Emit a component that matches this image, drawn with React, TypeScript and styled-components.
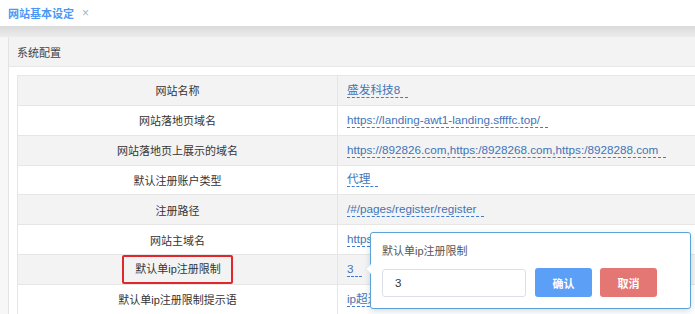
import styled, { createGlobalStyle } from "styled-components";

const GlobalStyle = createGlobalStyle`
  html, body {
    margin: 0;
    padding: 0;
    background: #fff;
    overflow: hidden;
  }
  body {
    font-family: "Helvetica Neue", "Liberation Sans", "Noto Sans CJK SC", sans-serif;
    font-size: 11px;
    color: #333;
  }
`;

const Page = styled.div`
  width: 695px;
  height: 314px;
  display: flex;
  flex-direction: column;
  overflow: hidden;
`;

const TabBar = styled.div`
  flex-shrink: 0;
  height: 26px;
  display: flex;
  align-items: center;
  padding-left: 8px;
  background: #fff;
`;

const Tab = styled.div`
  display: flex;
  align-items: center;
  gap: 8px;
  color: #4d98f4;
  font-size: 11px;
  font-weight: 600;
`;

const TabClose = styled.span`
  color: #a8b4c4;
  font-weight: 400;
  font-size: 12px;
`;

const ShadowBand = styled.div`
  flex-shrink: 0;
  height: 11px;
  background: linear-gradient(#dadada, #ececec);
`;

const Content = styled.div`
  flex: 1;
  display: flex;
  padding-left: 8px;
  background: #f7f7f7;
`;

const Panel = styled.div`
  flex: 1;
  border-left: 1px solid #e3e3e3;
  background: #fff;
`;

const PanelHeader = styled.div`
  height: 29px;
  display: flex;
  align-items: center;
  padding-left: 8px;
  background: #f3f3f3;
  border-bottom: 1px solid #e8e8e8;
  color: #444;
`;

const PanelBody = styled.div`
  padding: 8px 0 0 8px;
`;

const Table = styled.table`
  width: 700px;
  border-collapse: collapse;
  border: 1px solid #e6e6e6;
`;

const Row = styled.tr<{ $striped: boolean }>`
  height: 29.85px;
  background: ${({ $striped }) => ($striped ? "#f3f3f3" : "#fff")};
`;

const LabelCell = styled.td`
  width: 319px;
  padding: 0;
  text-align: center;
  border-right: 1px solid #e6e6e6;
  border-bottom: 1px solid #e6e6e6;
  color: #333;
`;

const ValueCell = styled.td`
  padding: 0 0 0 9px;
  border-bottom: 1px solid #e6e6e6;
  position: relative;
`;

const Highlight = styled.span`
  display: inline-block;
  vertical-align: middle;
  line-height: 25px;
  padding: 0 10px 0 11px;
  border: 2px solid #e0282c;
  border-radius: 2px;
`;

const EditLink = styled.span`
  display: inline-block;
  line-height: 14px;
  padding-right: 8px;
  font-size: 11.7px;
  color: #4274b8;
  border-bottom: 1px dashed #3f7bd0;
  white-space: nowrap;
`;

const Popover = styled.div`
  position: absolute;
  left: 32px;
  top: -23px;
  width: 297px;
  padding: 11px;
  background: #fff;
  border: 1px solid #5aa2da;
  border-radius: 3px;
  box-shadow: 0 2px 6px rgba(0, 0, 0, 0.15);
  z-index: 2;

  &::before,
  &::after {
    content: "";
    position: absolute;
    top: 31px;
    border-style: solid;
    border-color: transparent;
  }
  &::before {
    left: -6px;
    border-width: 5px 6px 5px 0;
    border-right-color: #d6e6f3;
  }
  &::after {
    left: -5px;
    border-width: 5px 6px 5px 0;
    border-right-color: #fff;
  }
`;

const PopTitle = styled.div`
  line-height: 14px;
  color: #555;
  margin-bottom: 10px;
`;

const PopForm = styled.div`
  display: flex;
  align-items: center;
`;

const NumInput = styled.input`
  box-sizing: border-box;
  width: 144px;
  height: 28px;
  padding: 0 12px;
  border: 1px solid #dcdfe6;
  border-radius: 3px;
  font-family: inherit;
  font-size: 11.5px;
  color: #333;
  outline: none;
`;

const Button = styled.button<{ $tone: "primary" | "danger" }>`
  height: 29px;
  width: 57px;
  margin-left: ${({ $tone }) => ($tone === "primary" ? "9px" : "8px")};
  border: none;
  border-radius: 3px;
  background: ${({ $tone }) => ($tone === "primary" ? "#5b9ff7" : "#e47673")};
  color: #fff;
  font-family: inherit;
  font-size: 11px;
  font-weight: 700;
  padding: 0;
`;

const rows = [
  { label: "网站名称", value: "盛发科技8" },
  { label: "网站落地页域名", value: "https://landing-awt1-landing.sffffc.top/" },
  {
    label: "网站落地页上展示的域名",
    value: "https://892826.com,https:/8928268.com,https:/8928288.com",
  },
  { label: "默认注册账户类型", value: "代理" },
  { label: "注册路径", value: "/#/pages/register/register" },
  { label: "网站主域名", value: "https://www.sffffc.top/" },
  { label: "默认单ip注册限制", value: "3", editing: true },
  { label: "默认单ip注册限制提示语", value: "ip超过注册限制" },
];

export default function App() {
  return (
    <Page>
      <GlobalStyle />
      <TabBar>
        <Tab>
          网站基本设定
          <TabClose>×</TabClose>
        </Tab>
      </TabBar>
      <ShadowBand />
      <Content>
        <Panel>
          <PanelHeader>系统配置</PanelHeader>
          <PanelBody>
            <Table>
              <tbody>
                {rows.map((r, i) => (
                  <Row key={r.label} $striped={i % 2 === 0}>
                    <LabelCell>
                      {r.editing ? <Highlight>{r.label}</Highlight> : r.label}
                    </LabelCell>
                    <ValueCell>
                      <EditLink>{r.value}</EditLink>
                      {r.editing && (
                        <Popover>
                          <PopTitle>默认单ip注册限制</PopTitle>
                          <PopForm>
                            <NumInput defaultValue="3" />
                            <Button $tone="primary">确认</Button>
                            <Button $tone="danger">取消</Button>
                          </PopForm>
                        </Popover>
                      )}
                    </ValueCell>
                  </Row>
                ))}
              </tbody>
            </Table>
          </PanelBody>
        </Panel>
      </Content>
    </Page>
  );
}
